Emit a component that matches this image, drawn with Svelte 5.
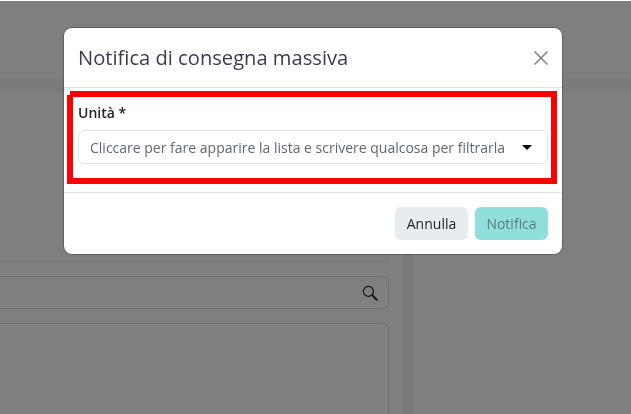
<script lang="ts">
	const placeholder = 'Cliccare per fare apparire la lista e scrivere qualcosa per filtrarla';
</script>

<div class="page">
	<div class="topbar"></div>
	<div class="subbar"></div>
	<div class="content">
		<div class="main">
			<div class="card"></div>
			<div class="search">
				<svg class="search__icon" viewBox="0 0 16 16" width="16" height="16" aria-hidden="true">
					<circle cx="6.4" cy="6.4" r="5" fill="none" stroke="#161a22" stroke-width="1.1" />
					<path d="M10.2 10.2 L14.8 14.8" stroke="#161a22" stroke-width="1.9" stroke-linecap="round" />
				</svg>
			</div>
			<div class="results"></div>
		</div>
		<div class="gutter"></div>
	</div>
</div>

<div class="backdrop"></div>

<div class="modal">
	<header class="modal__header">
		<h2 class="modal__title">Notifica di consegna massiva</h2>
		<svg class="modal__close" viewBox="0 0 14 14" width="14" height="14" aria-hidden="true">
			<path d="M0.5 0.5 L13.5 13.5 M13.5 0.5 L0.5 13.5" stroke="#808080" stroke-width="1.5" fill="none" />
		</svg>
	</header>
	<div class="modal__body">
		<div class="highlight">
			<div class="field__label">Unità *</div>
			<div class="select">
				<span class="select__text">{placeholder}</span>
				<span class="select__arrow"></span>
			</div>
		</div>
	</div>
	<footer class="modal__footer">
		<button class="btn btn--light">Annulla</button>
		<button class="btn btn--primary">Notifica</button>
	</footer>
</div>

<style>
	:global(body) { margin: 0; background: #fff; overflow: hidden; font-family: "Open Sans", sans-serif; }

	.page { height: 414px; display: flex; flex-direction: column; background: #fff; }
	.topbar { height: 79px; flex-shrink: 0; }
	.subbar { height: 13px; flex-shrink: 0; background: #f4f4f4; }
	.content { flex: 1; display: flex; }
	.main { width: 389px; flex-shrink: 0; display: flex; flex-direction: column; gap: 14px; }
	.card { height: 170px; flex-shrink: 0; border: 1px solid #eee; border-left: 0; border-top: 0; border-radius: 0 0 6px 0; box-sizing: border-box; }
	.search { height: 33px; flex-shrink: 0; border: 1px solid #dee2e6; border-left: 0; border-radius: 0 6px 6px 0; display: flex; align-items: center; justify-content: flex-end; padding-right: 10px; box-sizing: border-box; }
	.results { flex: 1; border: 1px solid #dee2e6; border-left: 0; border-bottom: 0; border-radius: 0 6px 0 0; }
	.gutter { width: 10px; margin-left: 14px; background: #f4f4f4; }

	.backdrop { position: fixed; inset: 1px 0 0 0; background: #000; opacity: 0.5; }

	.modal { position: fixed; left: 64px; top: 28px; width: 498px; background: #fff; border-radius: 8px; display: flex; flex-direction: column; box-shadow: 0 0 0 1px rgba(0, 0, 0, 0.25); }
	.modal__header { height: 60px; box-sizing: border-box; padding: 0 14px; display: flex; align-items: center; justify-content: space-between; border-bottom: 1px solid #dee2e6; }
	.modal__title { margin: 0; font-size: 20.15px; font-weight: 400; color: #3c3c50; line-height: 1.2; }
	.modal__body { height: 104px; box-sizing: border-box; }
	.highlight { position: relative; margin: 3px 5px 0 3px; height: 93px; box-sizing: border-box; border: 6px solid #f00; padding: 5px 3px 0 5px; }
	.highlight::before { content: ""; position: absolute; left: -6px; top: -6px; width: 3px; height: 4px; background: #fff; }
	.field__label { font-size: 14px; font-weight: 600; color: #212529; line-height: 21px; margin-bottom: 7px; }
	.select { height: 34px; box-sizing: border-box; border: 1px solid #dee2e6; border-radius: 6px; display: flex; align-items: center; justify-content: space-between; padding: 0 15px 0 11px; }
	.select__text { font-size: 14px; color: #5f6870; white-space: nowrap; }
	.select__arrow { width: 0; height: 0; border-left: 5px solid transparent; border-right: 5px solid transparent; border-top: 5px solid #000; }
	.modal__footer { height: 62px; box-sizing: border-box; border-top: 1px solid #dee2e6; padding: 0 14px; display: flex; align-items: center; justify-content: flex-end; gap: 7px; }
	.btn { height: 33px; width: 73px; padding: 0; border: 0; border-radius: 6px; font-family: inherit; font-size: 14px; }
	.btn--light { background: #e9ecef; color: #212529; }
	.btn--primary { background: #8fdfdc; color: #5f7a7a; }
</style>
